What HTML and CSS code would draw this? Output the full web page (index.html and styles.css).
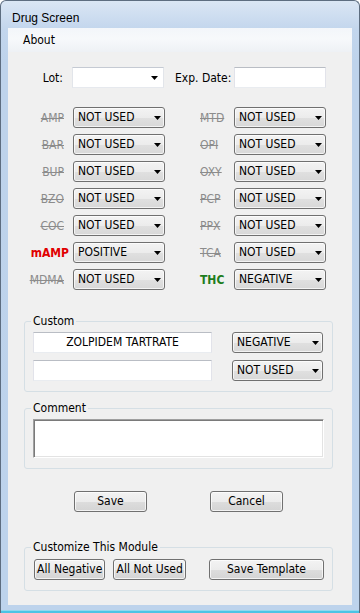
FILE: index.html
```html
<!DOCTYPE html>
<html>
<head>
<meta charset="utf-8">
<link rel="stylesheet" href="styles.css">
</head>
<body>
<div class="window">
  <div class="titlebar">Drug Screen</div>
  <div class="menubar"><span class="menu-item">About</span></div>
  <div class="client">
    <div class="lot-row">
      <span class="lot-label">Lot:</span>
      <div class="combo-edit"><svg class="arrow" width="7" height="4" viewBox="0 0 7 4"><path d="M0 0H7L3.5 4Z" fill="#000"/></svg></div>
      <span class="exp-label">Exp. Date:</span>
      <div class="textbox exp-box"></div>
    </div>

    <div class="drug-grid">
      <span class="drug-label left off">AMP</span>
      <div class="dropdown"><span>NOT USED</span><svg class="arrow" width="7" height="4" viewBox="0 0 7 4"><path d="M0 0H7L3.5 4Z" fill="#000"/></svg></div>
      <span class="drug-label right off">MTD</span>
      <div class="dropdown"><span>NOT USED</span><svg class="arrow" width="7" height="4" viewBox="0 0 7 4"><path d="M0 0H7L3.5 4Z" fill="#000"/></svg></div>

      <span class="drug-label left off">BAR</span>
      <div class="dropdown"><span>NOT USED</span><svg class="arrow" width="7" height="4" viewBox="0 0 7 4"><path d="M0 0H7L3.5 4Z" fill="#000"/></svg></div>
      <span class="drug-label right off">OPI</span>
      <div class="dropdown"><span>NOT USED</span><svg class="arrow" width="7" height="4" viewBox="0 0 7 4"><path d="M0 0H7L3.5 4Z" fill="#000"/></svg></div>

      <span class="drug-label left off">BUP</span>
      <div class="dropdown"><span>NOT USED</span><svg class="arrow" width="7" height="4" viewBox="0 0 7 4"><path d="M0 0H7L3.5 4Z" fill="#000"/></svg></div>
      <span class="drug-label right off">OXY</span>
      <div class="dropdown"><span>NOT USED</span><svg class="arrow" width="7" height="4" viewBox="0 0 7 4"><path d="M0 0H7L3.5 4Z" fill="#000"/></svg></div>

      <span class="drug-label left off">BZO</span>
      <div class="dropdown"><span>NOT USED</span><svg class="arrow" width="7" height="4" viewBox="0 0 7 4"><path d="M0 0H7L3.5 4Z" fill="#000"/></svg></div>
      <span class="drug-label right off">PCP</span>
      <div class="dropdown"><span>NOT USED</span><svg class="arrow" width="7" height="4" viewBox="0 0 7 4"><path d="M0 0H7L3.5 4Z" fill="#000"/></svg></div>

      <span class="drug-label left off">COC</span>
      <div class="dropdown"><span>NOT USED</span><svg class="arrow" width="7" height="4" viewBox="0 0 7 4"><path d="M0 0H7L3.5 4Z" fill="#000"/></svg></div>
      <span class="drug-label right off">PPX</span>
      <div class="dropdown"><span>NOT USED</span><svg class="arrow" width="7" height="4" viewBox="0 0 7 4"><path d="M0 0H7L3.5 4Z" fill="#000"/></svg></div>

      <span class="drug-label left positive">mAMP</span>
      <div class="dropdown"><span>POSITIVE</span><svg class="arrow" width="7" height="4" viewBox="0 0 7 4"><path d="M0 0H7L3.5 4Z" fill="#000"/></svg></div>
      <span class="drug-label right off">TCA</span>
      <div class="dropdown"><span>NOT USED</span><svg class="arrow" width="7" height="4" viewBox="0 0 7 4"><path d="M0 0H7L3.5 4Z" fill="#000"/></svg></div>

      <span class="drug-label left off">MDMA</span>
      <div class="dropdown"><span>NOT USED</span><svg class="arrow" width="7" height="4" viewBox="0 0 7 4"><path d="M0 0H7L3.5 4Z" fill="#000"/></svg></div>
      <span class="drug-label right negative">THC</span>
      <div class="dropdown"><span>NEGATIVE</span><svg class="arrow" width="7" height="4" viewBox="0 0 7 4"><path d="M0 0H7L3.5 4Z" fill="#000"/></svg></div>
    </div>

    <fieldset class="group custom-group">
      <legend>Custom</legend>
      <div class="custom-row">
        <div class="textbox custom-box">ZOLPIDEM TARTRATE</div>
        <div class="dropdown custom-drop"><span>NEGATIVE</span><svg class="arrow" width="7" height="4" viewBox="0 0 7 4"><path d="M0 0H7L3.5 4Z" fill="#000"/></svg></div>
      </div>
      <div class="custom-row second">
        <div class="textbox custom-box"></div>
        <div class="dropdown custom-drop"><span>NOT USED</span><svg class="arrow" width="7" height="4" viewBox="0 0 7 4"><path d="M0 0H7L3.5 4Z" fill="#000"/></svg></div>
      </div>
    </fieldset>

    <fieldset class="group comment-group">
      <legend>Comment</legend>
      <div class="comment-box"></div>
    </fieldset>

    <div class="action-row">
      <button class="btn save-btn">Save</button>
      <button class="btn cancel-btn">Cancel</button>
    </div>

    <fieldset class="group customize-group">
      <legend>Customize This Module</legend>
      <div class="customize-row">
        <button class="btn all-neg">All Negative</button>
        <button class="btn all-not">All Not Used</button>
        <button class="btn save-tpl">Save Template</button>
      </div>
    </fieldset>
  </div>
  <div class="bottom-frame"></div>
</div>
</body>
</html>
```
FILE: styles.css
```css
* { box-sizing: border-box; }

html, body {
  margin: 0;
  padding: 0;
  background: #ffffff;
}

body {
  font-family: "DejaVu Sans Condensed", "DejaVu Sans", sans-serif;
  font-stretch: condensed;
  font-size: 12px;
  color: #000;
}

.window {
  width: 360px;
  height: 613px;
  display: flex;
  flex-direction: column;
  border: 1px solid #5d6d80;
  border-bottom: none;
  border-radius: 6px 6px 0 0;
  background: linear-gradient(#dae6f4 0px, #c3d6ed 28px, #bed3eb 60px, #bdd3ec 100%);
  overflow: hidden;
}

.titlebar {
  height: 27px;
  padding-left: 11px;
  padding-top: 7px;
  font-family: "Liberation Sans", Arial, sans-serif;
  font-stretch: normal;
  font-size: 12px;
  line-height: 20px;
  color: #000;
}

.menubar {
  height: 24px;
  margin: 0 7px;
  background: linear-gradient(#f3f6fa 0%, #f7f9fb 45%, #eef1f5 100%);
  padding-left: 15px;
  display: flex;
  align-items: center;
}

.client {
  height: 553px;
  margin: 0 7px;
  background: #f0f0f0;
  display: flex;
  flex-direction: column;
}

.bottom-frame {
  height: 8px;
  border-bottom: 2px solid #4cc4e4;
  box-shadow: inset 0 -1px 0 #8fd8ee;
}

/* Lot row */
.lot-row {
  margin-top: 15px;
  height: 21px;
  display: flex;
  align-items: center;
}

.lot-label {
  width: 55px;
  text-align: right;
}

.combo-edit {
  margin-left: 9px;
  width: 92px;
  height: 21px;
  background: #fff;
  border: 1px solid;
  border-color: #c5cad3 #e2e5ea #e6e9ee #e2e5ea;
  display: flex;
  align-items: center;
  justify-content: flex-end;
  padding-right: 5px;
}

.exp-label {
  margin-left: 11px;
  width: 59px;
}

.textbox {
  background: #fff;
  border: 1px solid;
  border-color: #b9bdc4 #e2e3ea #e9ecf0 #e2e3ea;
  height: 21px;
}

.exp-box {
  width: 92px;
}

/* Drug grid */
.drug-grid {
  margin-top: 19px;
  display: grid;
  grid-template-columns: 65px 92px 69px 92px;
  grid-auto-rows: 21px;
  row-gap: 6px;
  align-items: center;
}

.drug-label.left {
  text-align: right;
  padding-right: 9px;
}

.drug-label.right {
  padding-left: 35px;
}

.drug-label.off {
  color: #8c8c8c;
  text-decoration: line-through;
  text-decoration-color: #8c8c8c;
}

.drug-label.positive {
  color: #e00000;
  font-weight: bold;
  padding-right: 4px;
}

.drug-label.negative {
  color: #1d7d1d;
  font-weight: bold;
}

.dropdown {
  height: 21px;
  border: 1px solid #707070;
  border-radius: 3px;
  background: linear-gradient(#f3f3f3 0%, #ececec 50%, #e0e0e0 51%, #d8d8d8 100%);
  box-shadow: inset 0 0 0 1px rgba(255, 255, 255, 0.7);
  display: flex;
  align-items: center;
  justify-content: space-between;
  padding: 0 3px 0 4px;
}

.dropdown span {
  line-height: 19px;
}

.arrow {
  display: block;
  flex: none;
}

/* Group boxes */
.group {
  margin: 0;
  margin-left: 16px;
  width: 309px;
  border: 1px solid #d5dfe5;
  border-radius: 3px;
  padding: 4px 8px 10px 8px;
  min-width: 0;
}

.group legend {
  margin-left: -2px;
  padding: 0 2px;
  line-height: 14px;
  height: 14px;
}

.custom-group {
  margin-top: 24px;
}

.custom-row {
  display: flex;
  align-items: center;
  height: 21px;
}

.custom-row.second {
  margin-top: 7px;
}

.custom-box {
  width: 179px;
  text-align: center;
  line-height: 19px;
}

.custom-drop {
  margin-left: 20px;
  width: 91px;
}

.comment-group {
  margin-top: 9px;
}

.comment-box {
  width: 291px;
  height: 39px;
  background: #fff;
  border: 1px solid;
  border-color: #a0a0a0 #ffffff #ffffff #a0a0a0;
  box-shadow: inset 1px 1px 0 #7a7a7a, inset -1px -1px 0 #e3e3e3;
}

/* Buttons */
.btn {
  font-family: inherit;
  font-stretch: condensed;
  font-size: 12px;
  color: #000;
  height: 21px;
  margin: 0;
  padding: 0;
  border: 1px solid #707070;
  border-radius: 3px;
  background: linear-gradient(#f3f3f3 0%, #ececec 50%, #dddddd 51%, #d4d4d4 100%);
  box-shadow: inset 0 0 0 1px rgba(255, 255, 255, 0.7);
  line-height: 19px;
  text-align: center;
}

.action-row {
  margin-top: 22px;
  display: flex;
}

.save-btn {
  margin-left: 66px;
  width: 73px;
}

.cancel-btn {
  margin-left: 63px;
  width: 73px;
}

.customize-group {
  margin-top: 28px;
  padding-top: 5px;
}

.customize-row {
  display: flex;
  height: 21px;
}

.all-neg {
  margin-left: 1px;
  width: 72px;
}

.all-not {
  margin-left: 8px;
  width: 73px;
}

.save-tpl {
  margin-left: 23px;
  width: 116px;
}
```
